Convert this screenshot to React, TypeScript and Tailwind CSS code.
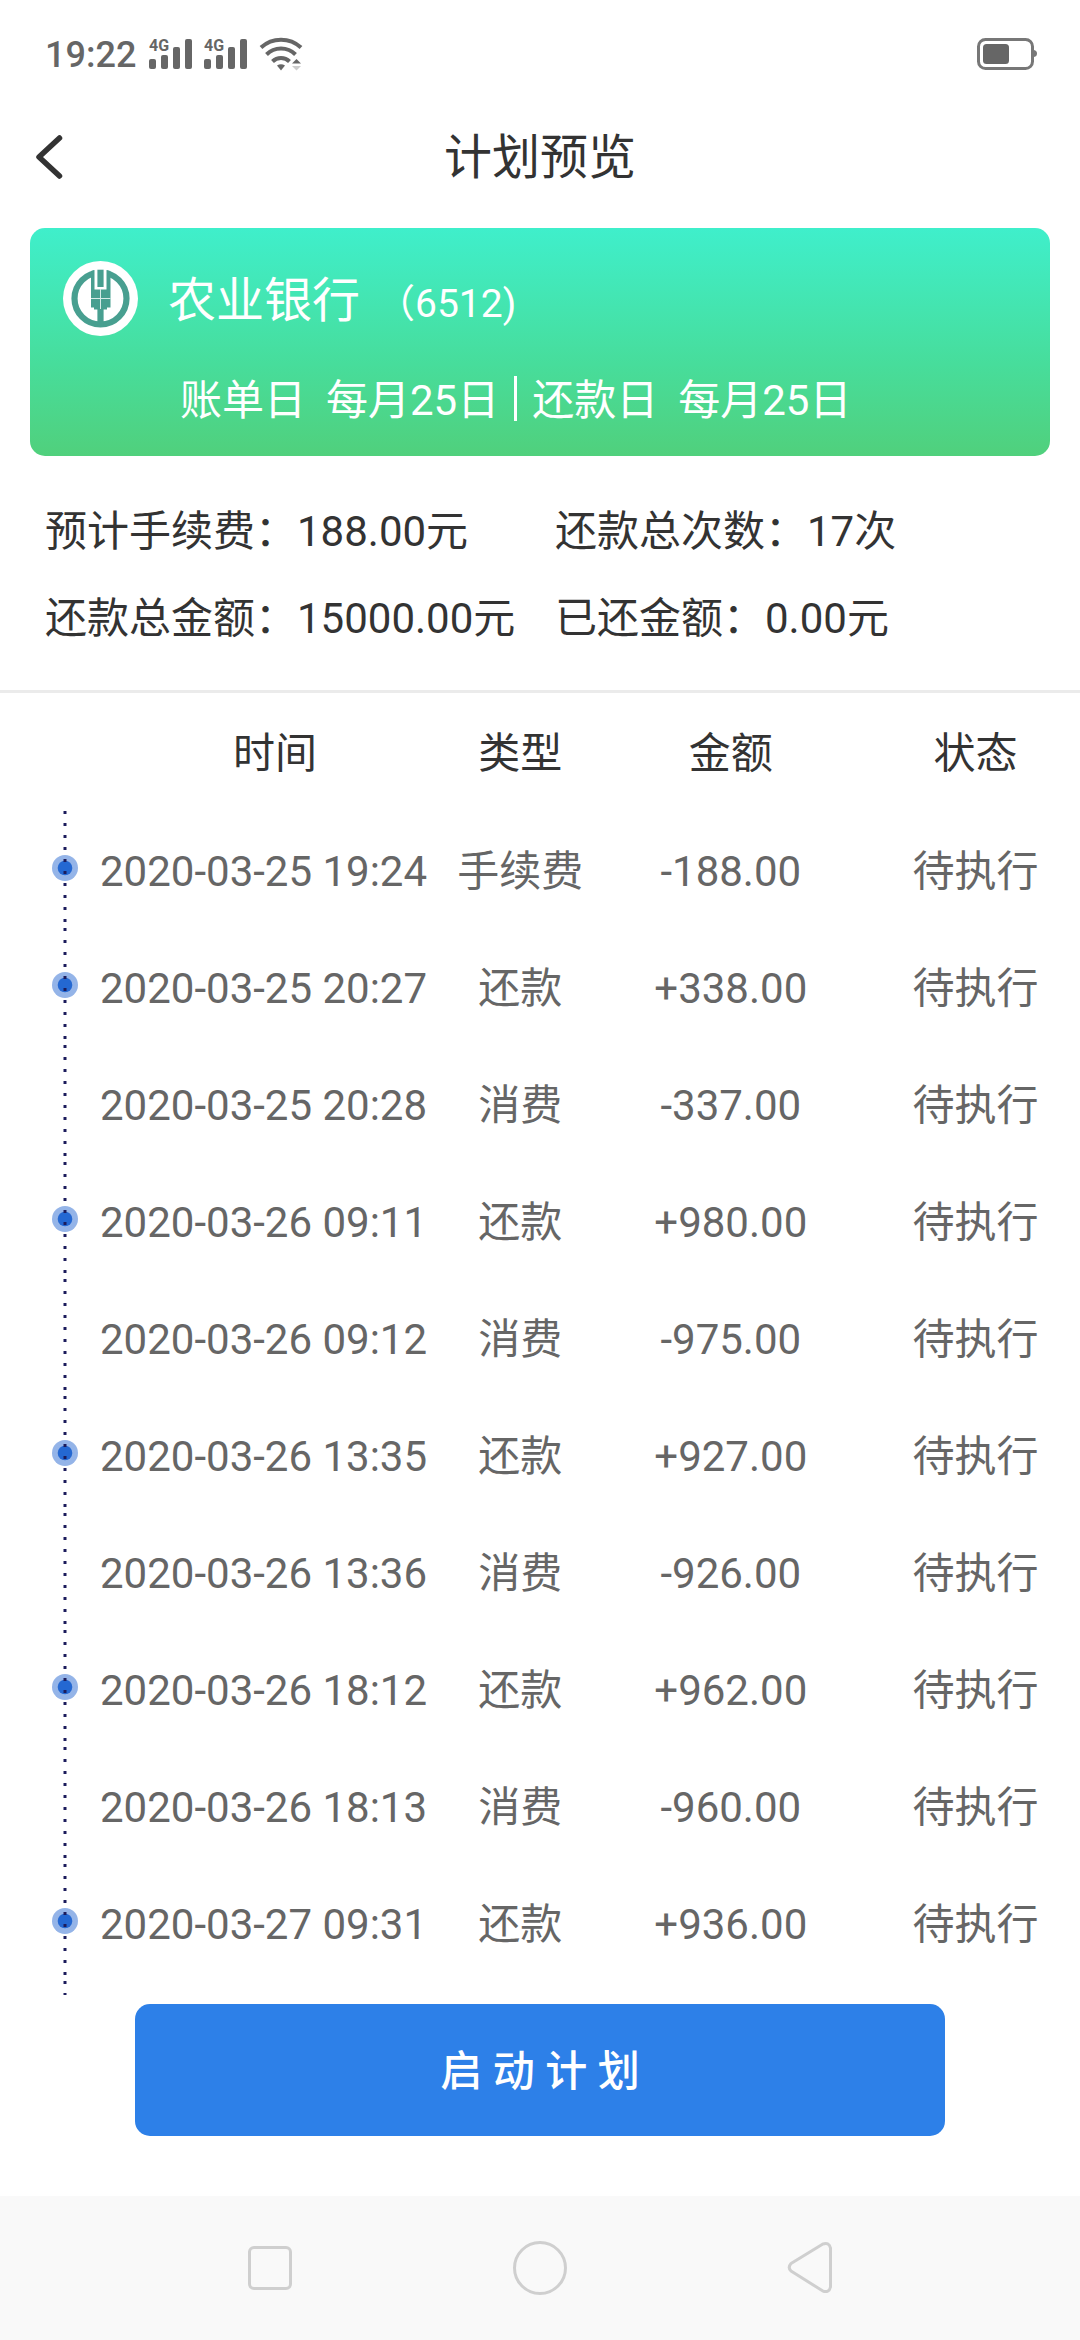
type PlanItem = {
  time: string;
  type: "手续费" | "还款" | "消费";
  amount: string;
  status: string;
};

const items: PlanItem[] = [
  { time: "2020-03-25 19:24", type: "手续费", amount: "-188.00", status: "待执行" },
  { time: "2020-03-25 20:27", type: "还款", amount: "+338.00", status: "待执行" },
  { time: "2020-03-25 20:28", type: "消费", amount: "-337.00", status: "待执行" },
  { time: "2020-03-26 09:11", type: "还款", amount: "+980.00", status: "待执行" },
  { time: "2020-03-26 09:12", type: "消费", amount: "-975.00", status: "待执行" },
  { time: "2020-03-26 13:35", type: "还款", amount: "+927.00", status: "待执行" },
  { time: "2020-03-26 13:36", type: "消费", amount: "-926.00", status: "待执行" },
  { time: "2020-03-26 18:12", type: "还款", amount: "+962.00", status: "待执行" },
  { time: "2020-03-26 18:13", type: "消费", amount: "-960.00", status: "待执行" },
  { time: "2020-03-27 09:31", type: "还款", amount: "+936.00", status: "待执行" },
];

export default function App() {
  return (
    <div className="flex min-h-screen flex-col bg-white font-['Roboto','Noto_Sans_CJK_SC',sans-serif] text-[42px] leading-[63px] text-[#333]">
      <StatusBar />

      <header className="grid h-[98px] grid-cols-[100px_1fr_100px] items-center">
        <button type="button" aria-label="返回" className="flex h-full items-center pl-[34px]">
          <svg width="30" height="46" viewBox="0 0 30 46" fill="none">
            <path
              d="M25.500 4L5 23L25.500 42"
              stroke="#333"
              strokeWidth="5.500"
              strokeLinecap="round"
              strokeLinejoin="round"
            />
          </svg>
        </button>
        <h1 className="text-center text-[48px]">计划预览</h1>
      </header>

      <main className="flex flex-1 flex-col">
        <section className="mx-[30px] mt-[22px] rounded-[15px] bg-linear-to-b from-[#3fefcb] via-[#47dd9b] via-60% to-[#50d07c] pt-[33px] pb-[35px] text-white">
          <div className="flex h-[75px] items-center gap-[30px] pl-[33px]">
            <BankLogo />
            <div className="flex items-baseline gap-4 pt-2">
              <h2 className="text-[48px]">农业银行</h2>
              <span className="text-[39px]">（6512)</span>
            </div>
          </div>
          <div className="mt-10 flex h-[45px] items-center gap-[15px] pl-[150px]">
            <p className="flex gap-5 pt-[3px]">
              <span>账单日</span>
              <span>每月25日</span>
            </p>
            <span className="h-full w-[3px] bg-white" />
            <p className="flex gap-5 pt-[3px]">
              <span>还款日</span>
              <span>每月25日</span>
            </p>
          </div>
        </section>

        <section className="grid grid-cols-2 border-b-[3px] border-[#ebebeb] pt-8 pr-[15px] pb-7 pl-[45px] leading-[87px] whitespace-nowrap">
          <p>预计手续费：188.00元</p>
          <p>还款总次数：17次</p>
          <p>还款总金额：15000.00元</p>
          <p>已还金额：0.00元</p>
        </section>

        <table className="w-full table-fixed whitespace-nowrap">
          <colgroup>
            <col className="w-[100px]" />
            <col className="w-[350px]" />
            <col className="w-[13%]" />
            <col className="w-[26%]" />
            <col />
          </colgroup>
          <thead>
            <tr className="h-[118px]">
              <td />
              <th className="p-0 pt-[3px] font-normal">时间</th>
              <th className="p-0 pt-[3px] font-normal">类型</th>
              <th className="p-0 pt-[3px] font-normal">金额</th>
              <th className="p-0 pt-[3px] font-normal">状态</th>
            </tr>
          </thead>
          <tbody className="text-center text-[#666]">
            {items.map((item) => (
              <tr key={item.time} className="h-[117px]">
                <td className="p-0 pl-[52px]">
                  <Rail height={117} dot={item.type !== "消费"} />
                </td>
                <td className="p-0 pt-[3px] text-left">{item.time}</td>
                <td className="p-0 pt-[3px]">{item.type}</td>
                <td className="p-0 pt-[3px]">{item.amount}</td>
                <td className="p-0 pt-[3px]">{item.status}</td>
              </tr>
            ))}
          </tbody>
        </table>
        <div className="pl-[52px]">
          <Rail height={14} />
        </div>

        <button
          type="button"
          className="mx-[135px] mt-[9px] mb-[60px] h-[132px] rounded-[15px] bg-[#2d80e8] pt-[3px] font-medium text-white"
        >
          启 动 计 划
        </button>
      </main>

      <NavBar />
    </div>
  );
}

// dotted time line, one segment per row
function Rail({ height, dot = false }: { height: number; dot?: boolean }) {
  return (
    <svg width="26" height={height} className="block" aria-hidden="true">
      {dot && (
        <>
          <circle cx="13" cy="57" r="13" fill="#94b4e8" />
          <circle cx="13" cy="57" r="7.300" fill="#2468d2" />
        </>
      )}
      <path d={`M13 0V${height}`} stroke="#1c1c5c" strokeWidth="3" strokeDasharray="3 9" />
    </svg>
  );
}

function Signal() {
  return (
    <div className="flex h-[31px] items-end text-[#666]">
      <svg width="44" height="36" viewBox="0 -5 44 36" fill="currentColor" className="overflow-visible" aria-hidden="true">
        <text x="0" y="12" fontSize="16" fontWeight="700">
          4G
        </text>
        <rect x="0" y="20" width="7" height="10" rx="2" />
        <rect x="12" y="16" width="7" height="14" rx="2" />
        <rect x="24" y="8" width="7" height="22" rx="2" />
        <rect x="36" y="0" width="7" height="30" rx="2" />
      </svg>
    </div>
  );
}

function StatusBar() {
  return (
    <div className="flex h-[108px] items-center justify-between pr-[42px] pl-[45px] text-[36px] text-[#666]">
      <div className="flex items-center">
        <span className="pt-[3px] font-medium">19:22</span>
        <div className="ml-[13px] flex items-center gap-[11px]">
          <Signal />
          <Signal />
          <svg width="44" height="36" viewBox="0 0 44 36" fill="none" aria-hidden="true">
            <g stroke="#666" strokeWidth="4">
              <path d="M2 11.500A29.500 29.500 0 0 1 42 11.500" />
              <path d="M7.500 18.500A20.500 20.500 0 0 1 36.500 18.500" />
              <path d="M13.500 25.500A12 12 0 0 1 30.500 25.500" />
            </g>
            <path d="M18 29.500Q22 27 26 29.500L22 34.500Z" fill="#666" />
            <path d="M33 27.500L37.500 23L42 27.500Z" fill="#666" />
            <path d="M33 30L37.500 34.500L42 30Z" fill="#ccc" />
          </svg>
        </div>
      </div>
      <svg width="61" height="32" viewBox="0 0 61 32" fill="none" aria-hidden="true">
        <rect x="1.500" y="1.500" width="54" height="29" rx="7" stroke="#777" strokeWidth="3" />
        <rect x="6" y="6" width="26" height="20" rx="3.500" fill="#666" />
        <path d="M57 12Q60 12.500 60 15.500T57 19Z" fill="#777" />
      </svg>
    </div>
  );
}

function BankLogo() {
  return (
    <svg width="75" height="75" viewBox="0 0 75 75" aria-label="农业银行">
      <circle cx="37.500" cy="37.500" r="37.500" fill="#fff" />
      <circle cx="37.500" cy="37.500" r="26" fill="none" stroke="#489f90" strokeWidth="6.200" />
      <path d="M31 6H44V30H31Z" fill="#fff" />
      <g fill="#489f90">
        <path d="M28 10L31.500 9V28.500H43.500V9L47.500 10V46.500H44V48.500H40.600V66H34.400V48.500H31V46.500H28Z" />
        <path d="M34.400 8.700H40.600V26H34.400Z" />
      </g>
      <path d="M37.500 28V48M28 37.500H47.500" stroke="#d5ebe7" strokeWidth="1" />
    </svg>
  );
}

function NavBar() {
  return (
    <nav className="grid h-36 grid-cols-3 bg-[#f9f9f9] px-[12.5%]">
      <button type="button" aria-label="最近任务" className="flex items-center justify-center">
        <span className="size-11 rounded-md border-[3px] border-[#cfcfcf]" />
      </button>
      <button type="button" aria-label="主屏幕" className="flex items-center justify-center">
        <span className="size-[54px] rounded-full border-[3px] border-[#cfcfcf]" />
      </button>
      <button type="button" aria-label="返回上一页" className="flex items-center justify-center">
        <svg width="46" height="54" viewBox="0 0 46 54" fill="none">
          <path
            d="M35.500 3.200L4 22.500Q0.500 26.500 4 30L35.500 49.800Q42 52.500 43.500 46V7Q42 0.500 35.500 3.200Z"
            stroke="#cfcfcf"
            strokeWidth="3"
            strokeLinejoin="round"
          />
        </svg>
      </button>
    </nav>
  );
}
